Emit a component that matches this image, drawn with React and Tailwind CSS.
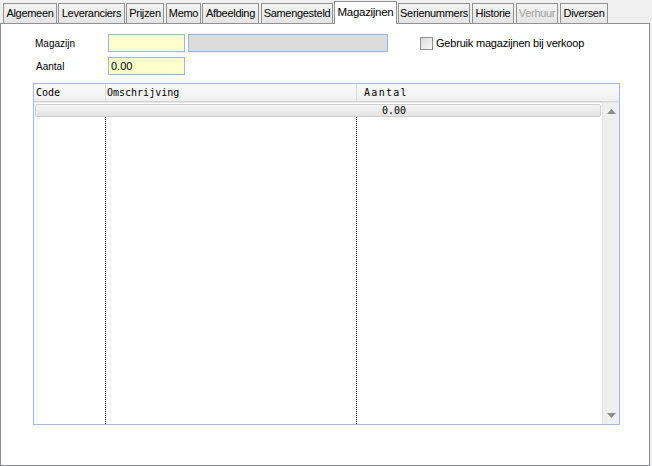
import React from "react";

const tabs = [
  { label: "Algemeen", cls: "ml-[3px] w-[54px]" },
  { label: "Leveranciers", cls: "ml-[1px] w-[67px]" },
  { label: "Prijzen", cls: "ml-[1px] w-[38px]" },
  { label: "Memo", cls: "ml-[2px] w-[35px]" },
  { label: "Afbeelding", cls: "ml-[1px] w-[57px]" },
  { label: "Samengesteld", cls: "ml-[2px] w-[72px]" },
  { label: "Magazijnen", cls: "ml-[1px] w-[63px]", active: true },
  { label: "Serienummers", cls: "ml-[1px] w-[72px]" },
  { label: "Historie", cls: "ml-[2px] w-[42px]" },
  { label: "Verhuur", cls: "ml-[2px] w-[42px]", disabled: true },
  { label: "Diversen", cls: "ml-[2px] w-[48px]" },
];

const Tab = ({ label, cls, active, disabled }) => {
  if (active) {
    return (
      <div className={`${cls} h-[23px] -mb-[1px] z-10 bg-white border border-b-0 border-[#919191] flex items-center justify-center text-[11.5px] tracking-[-0.3px] text-black`}>
        {label}
      </div>
    );
  }
  return (
    <div
      className={`${cls} h-[20px] bg-gradient-to-b from-[#f4f4f4] to-[#e4e4e4] border border-b-0 border-[#919191] flex items-center justify-center text-[11px] tracking-[-0.3px] ${
        disabled ? "text-[#a0a0a0]" : "text-black"
      }`}
    >
      {label}
    </div>
  );
};

const App = () => {
  return (
    <div className="w-[652px] h-[466px] bg-[#f0f0f0] overflow-hidden font-['Liberation_Sans',Arial,sans-serif]">
      {/* tab strip */}
      <div className="flex items-end h-[23px]">
        {tabs.map((t) => (
          <Tab key={t.label} {...t} />
        ))}
      </div>

      {/* page */}
      <div className="w-[650px] h-[443px] bg-white border border-[#898c95] border-t-[#919191]">
        <div className="pt-[10px] pl-[34px]">
          <div className="flex items-center h-[18px]">
            <div className="w-[73px] text-[10px] text-black">Magazijn</div>
            <div className="w-[77px] h-[18px] bg-[#ffffcc] border border-[#9db4e4]"></div>
            <div className="ml-[3px] w-[200px] h-[18px] bg-[#dcdcdc] border border-[#9db4e4]"></div>
            <div className="ml-[32px] flex items-center">
              <div className="w-[13px] h-[13px] border border-[#8e8f8f] bg-gradient-to-br from-[#dcdcdc] to-[#f8f8f8]"></div>
              <span className="ml-[3px] text-[11px] tracking-[-0.2px] text-black">Gebruik magazijnen bij verkoop</span>
            </div>
          </div>
          <div className="flex items-center h-[18px] mt-[5px]">
            <div className="w-[73px] pl-[1px] text-[10px] text-black">Aantal</div>
            <div className="w-[77px] h-[18px] bg-[#ffffcc] border border-[#9db4e4] pl-[2px] flex items-center text-[11px] text-black">
              0.00
            </div>
          </div>

          {/* grid */}
          <div className="mt-[8px] -ml-[2px] w-[587px] h-[342px] border border-[#a3b8e8] flex flex-col font-['DejaVu_Sans_Mono',monospace] text-[10px] text-black">
            <div className="flex h-[18px] bg-gradient-to-b from-[#fbfbfb] to-[#efefef] border-b border-[#d4d4d4]">
              <div className="w-[72px] pl-[2px] flex items-center border-r border-[#dedede]">Code</div>
              <div className="w-[251px] pl-[1px] flex items-center border-r border-[#dedede]">Omschrijving</div>
              <div className="flex-1 pl-[7px] flex items-center tracking-[1.3px]">Aantal</div>
            </div>
            <div className="flex flex-1 border-t border-[#e6e6e6]">
              <div className="flex-1 flex flex-col">
                <div className="mx-[1px] mt-[1px] h-[13px] rounded-[2px] border border-[#cfcfcf] bg-gradient-to-b from-[#f6f6f6] to-[#e2e2e2] flex">
                  <div className="w-[71px]"></div>
                  <div className="w-[251px]"></div>
                  <div className="flex-1 pl-[24px] flex items-center leading-none">0.00</div>
                </div>
                <div className="flex flex-1">
                  <div className="w-[72px] border-r border-dotted border-black"></div>
                  <div className="w-[251px] border-r border-dotted border-black"></div>
                  <div className="flex-1"></div>
                </div>
              </div>
              <div className="w-[17px] bg-[#efefef] border-l border-[#e2e2e2] flex flex-col items-center justify-between py-[6px]">
                <svg width="9" height="5" viewBox="0 0 9 5">
                  <path d="M4.5 0 L9 5 L0 5 Z" fill="#8a8a8a" />
                </svg>
                <svg width="9" height="5" viewBox="0 0 9 5">
                  <path d="M0 0 L9 0 L4.5 5 Z" fill="#8a8a8a" />
                </svg>
              </div>
            </div>
          </div>
        </div>
      </div>
    </div>
  );
};

export default App;
